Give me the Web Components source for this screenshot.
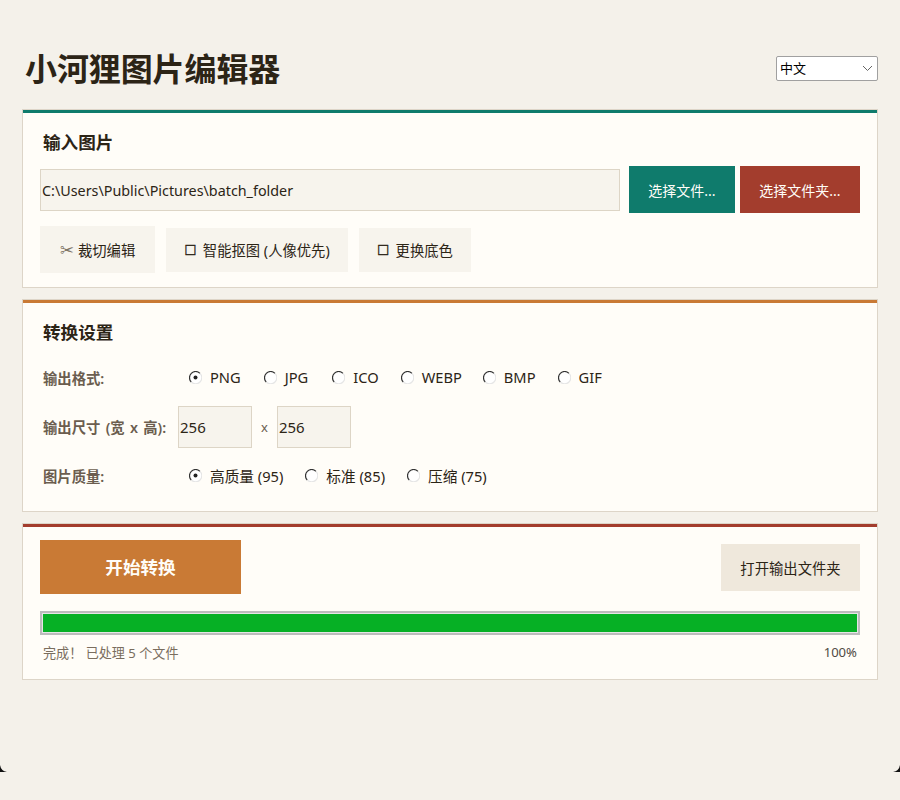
<!DOCTYPE html>
<html lang="zh">
<head>
<meta charset="utf-8">
<title>小河狸图片编辑器</title>
<style>
  html, body { margin: 0; height: 800px; overflow: hidden; }
  body {
    background: #f4f1ea;
    color: #2c2416;
    font-family: "Noto Sans", "Noto Sans CJK SC", sans-serif;
    font-size: 14px;
  }
</style>
</head>
<body>
<template id="card-tpl">
  <style>
    :host { display: block; background: #fffdf8; border: 1px solid #ddd5c8; }
    .bar { height: 3px; background: var(--accent, #0f7b6c); }
    .body { padding: var(--pad, 17px 17px 14px 17px); display: flex; flex-direction: column; }
  </style>
  <div class="bar"></div>
  <div class="body"><slot></slot></div>
</template>

<script>
function defineSimple(tag, html) {
    customElements.define(tag, class extends HTMLElement {
        constructor() {
            super();
            this.attachShadow({ mode: 'open' }).innerHTML = html;
        }
    });
}

class PanelCard extends HTMLElement {
    constructor() {
        super();
        const tpl = document.getElementById('card-tpl');
        this.attachShadow({ mode: 'open' }).appendChild(tpl.content.cloneNode(true));
    }
}
customElements.define('panel-card', PanelCard);

defineSimple('app-header', `
  <style>
    :host { display: flex; justify-content: space-between; align-items: center; height: 40px; margin: 48px 0 21px; }
  </style>
  <slot></slot>
`);

defineSimple('app-title', `
  <style>
    :host { display: block; font-size: 32px; font-weight: 700; line-height: 44px; color: #2c2416; margin: 2px 0 0 3px; letter-spacing: -0.1px; }
  </style>
  <slot></slot>
`);

defineSimple('lang-select', `
  <style>
    :host {
      display: flex; align-items: center; justify-content: space-between; box-sizing: border-box;
      width: 102px; height: 25px; padding: 0 4px 2px 3px; background: #fff;
      border: 1px solid #a0a0a0; border-radius: 2px; font-size: 13px; color: #000;
    }
    svg { display: block; margin-top: 2px; }
  </style>
  <slot></slot>
  <svg width="11" height="7" viewBox="0 0 11 7"><path d="M1 1l4.5 4.5L10 1" fill="none" stroke="#666" stroke-width="1"/></svg>
`);

defineSimple('section-title', `
  <style>
    :host { display: block; font-size: 17.6px; font-weight: 600; line-height: 24px; margin-left: 3px; color: #2c2416; }
  </style>
  <slot></slot>
`);

defineSimple('flow-row', `
  <style>
    :host { display: flex; align-items: center; gap: var(--gap, 0); margin-top: var(--top, 0); }
  </style>
  <slot></slot>
`);

defineSimple('text-box', `
  <style>
    :host {
      display: flex; align-items: center; box-sizing: border-box; height: 42px; width: var(--w, 74px);
      padding: var(--inset, 0 1px); background: #f7f4ed; border: 1px solid #ddd5c6;
      font-size: var(--fs, 15px); color: #2c2416; white-space: nowrap;
    }
  </style>
  <slot></slot>
`);

defineSimple('flat-button', `
  <style>
    :host {
      display: flex; align-items: center; justify-content: center; box-sizing: border-box;
      width: var(--w); height: var(--h, 44px); padding-bottom: var(--pb, 0); background: var(--bg, #f7f4ed); color: var(--fg, #2c2416);
      font-size: var(--fs, 14.33px); font-weight: var(--fw, 400); white-space: nowrap; flex: none;
    }
  </style>
  <slot></slot>
`);

defineSimple('box-glyph', `
  <style>
    :host { font-family: "DejaVu Sans", sans-serif; font-size: 14px; -webkit-text-stroke: 0.35px #2c2416; margin-right: 6px; }
  </style>
  ☐
`);

defineSimple('form-row', `
  <style>
    :host { display: flex; align-items: center; height: 42px; margin-top: 7px; }
    .label { width: 138px; padding: 0 0 2px 3px; box-sizing: border-box; flex: none; font-size: 14.33px; font-weight: 600; color: #6b5d4f; white-space: nowrap; word-spacing: 1.6px; }
    .fields { display: flex; align-items: center; gap: var(--gap, 23px); }
  </style>
  <div class="label"><slot name="label"></slot></div>
  <div class="fields"><slot></slot></div>
`);

class RadioOption extends HTMLElement {
    constructor() {
        super();
        this.attachShadow({ mode: 'open' });
    }
    connectedCallback() {
        const dot = this.hasAttribute('checked') ? '<circle cx="6.5" cy="6.5" r="2" fill="#222"/>' : '';
        this.shadowRoot.innerHTML = `
          <style>
            :host { display: inline-flex; align-items: center; gap: 8px; margin-bottom: 2px; font-size: 14.67px; color: #2c2416; white-space: nowrap; }
            svg { display: block; flex: none; }
          </style>
          <svg width="13" height="13" viewBox="0 0 13 13">
            <circle cx="6.5" cy="6.5" r="6" fill="#fff"/>
            <path d="M11 2.3A6 6 0 0 0 2.3 11" fill="none" stroke="#333" stroke-width="1.2"/>
            <path d="M2.3 11A6 6 0 0 0 11 2.3" fill="none" stroke="#e6e6e6" stroke-width="1.2"/>
            ${dot}
          </svg>
          <slot></slot>
        `;
    }
}
customElements.define('radio-option', RadioOption);

class ProgressBar extends HTMLElement {
    constructor() {
        super();
        this.attachShadow({ mode: 'open' });
    }
    connectedCallback() {
        const value = this.getAttribute('value') || 0;
        this.shadowRoot.innerHTML = `
          <style>
            :host { display: block; box-sizing: border-box; height: 24px; border: 2px solid #bcbcbc; background: #e6e6e6; padding: 1px; margin-top: 17px; }
            .fill { height: 100%; background: #06b025; }
          </style>
          <div class="fill" style="width:${value}%"></div>
        `;
    }
}
customElements.define('progress-bar', ProgressBar);

defineSimple('status-line', `
  <style>
    :host { display: flex; justify-content: space-between; align-items: center; height: 20px; margin: 7px 3px 1px; font-size: 13.1px; color: #7a6d5e; }
  </style>
  <slot></slot>
`);

defineSimple('window-corners', `
  <style>
    :host { position: absolute; left: 0; right: 0; top: 764px; height: 8px; display: block; pointer-events: none; }
    svg { position: absolute; top: 0; }
    .l { left: 0; }
    .r { right: 0; transform: scaleX(-1); }
  </style>
  <svg class="l" width="7" height="8" viewBox="0 0 7 8"><path d="M0 1Q1 7 7 8H0Z" fill="#111"/></svg>
  <svg class="r" width="7" height="8" viewBox="0 0 7 8"><path d="M0 1Q1 7 7 8H0Z" fill="#111"/></svg>
`);

defineSimple('app-page', `
  <style>
    :host { display: flex; flex-direction: column; gap: 11px; padding: 0 22px; height: 800px; box-sizing: border-box; }
    ::slotted(app-header) { margin-bottom: 10px; }
  </style>
  <slot></slot>
`);
</script>

<app-page>
  <app-header>
    <app-title>小河狸图片编辑器</app-title>
    <lang-select>中文</lang-select>
  </app-header>

  <panel-card style="--accent:#0f7b6c">
    <section-title>输入图片</section-title>
    <flow-row style="--top:12px;--gap:5px">
      <text-box style="--w:580px;--fs:14.33px;--inset:2px 1px 0;margin-right:4px">C:\Users\Public\Pictures\batch_folder</text-box>
      <flat-button style="--w:106px;--h:47px;--bg:#0f7b6c;--fg:#fffdf8;--fs:14px">选择文件...</flat-button>
      <flat-button style="--w:120px;--h:47px;--bg:#a33d2d;--fg:#fffdf8;--fs:14px">选择文件夹...</flat-button>
    </flow-row>
    <flow-row style="--top:13px;--gap:11px">
      <flat-button style="--w:115px;--h:47px"><span style="font-family:'DejaVu Sans';font-size:17px;color:#7d7264;margin-right:4px">✂</span>裁切编辑</flat-button>
      <flat-button style="--w:182px"><box-glyph></box-glyph>智能抠图 (人像优先)</flat-button>
      <flat-button style="--w:112px"><box-glyph></box-glyph>更换底色</flat-button>
    </flow-row>
  </panel-card>

  <panel-card style="--accent:#c97a35;--pad:17px 17px 14px 17px">
    <section-title>转换设置</section-title>
    <form-row style="margin-top:13px">
      <span slot="label">输出格式:</span>
      <radio-option style="margin-left:11px" checked>PNG</radio-option>
      <radio-option>JPG</radio-option>
      <radio-option style="margin-left:1px">ICO</radio-option>
      <radio-option style="margin-left:-1px">WEBP</radio-option>
      <radio-option style="margin-left:-2px">BMP</radio-option>
      <radio-option style="margin-left:-1px">GIF</radio-option>
    </form-row>
    <form-row>
      <span slot="label">输出尺寸 (宽 x 高):</span>
      <text-box>256</text-box>
      <span style="font-size:13px;color:#6b5d4f;margin:0 -14px">x</span>
      <text-box>256</text-box>
    </form-row>
    <form-row style="--gap:22px">
      <span slot="label">图片质量:</span>
      <radio-option style="margin-left:11px" checked>高质量 (95)</radio-option>
      <radio-option>标准 (85)</radio-option>
      <radio-option>压缩 (75)</radio-option>
    </form-row>
  </panel-card>

  <panel-card style="--accent:#a33d2d;--pad:13px 17px 16px 17px">
    <flow-row style="justify-content:space-between">
      <flat-button style="--w:201px;--h:54px;--pb:2px;--bg:#c97a35;--fg:#fffdf8;--fs:17.6px;--fw:600">开始转换</flat-button>
      <flat-button style="--w:139px;--h:47px;--bg:#efe8dc">打开输出文件夹</flat-button>
    </flow-row>
    <progress-bar value="100"></progress-bar>
    <status-line><span>完成！ 已处理 5 个文件</span><span style="color:#4f4a42">100%</span></status-line>
  </panel-card>

  <window-corners></window-corners>
</app-page>
</body>
</html>
